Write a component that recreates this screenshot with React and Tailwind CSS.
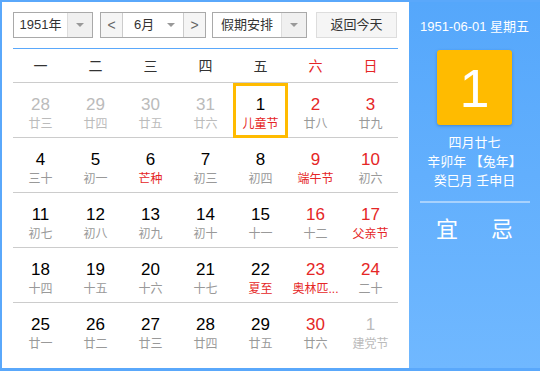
import React from 'react'

const FONT = { fontFamily: '"Liberation Sans", Arial, "Noto Sans CJK SC", sans-serif' }

const WEEK = ['一', '二', '三', '四', '五', '六', '日']

// [day, lunar, kind] kind: o = other month, r = red number, f = festival text red
const ROWS = [
  [['28', '廿三', 'o'], ['29', '廿四', 'o'], ['30', '廿五', 'o'], ['31', '廿六', 'o'], ['1', '儿童节', 'f', true], ['2', '廿八', 'r'], ['3', '廿九', 'r']],
  [['4', '三十'], ['5', '初一'], ['6', '芒种', 'f'], ['7', '初三'], ['8', '初四'], ['9', '端午节', 'rf'], ['10', '初六', 'r']],
  [['11', '初七'], ['12', '初八'], ['13', '初九'], ['14', '初十'], ['15', '十一'], ['16', '十二', 'r'], ['17', '父亲节', 'rf']],
  [['18', '十四'], ['19', '十五'], ['20', '十六'], ['21', '十七'], ['22', '夏至', 'f'], ['23', '奥林匹...', 'rf'], ['24', '二十', 'r']],
  [['25', '廿一'], ['26', '廿二'], ['27', '廿三'], ['28', '廿四'], ['29', '廿五'], ['30', '廿六', 'r'], ['1', '建党节', 'o']],
]

function Arrow() {
  return (
    <svg width="8" height="5" viewBox="0 0 8 5">
      <path d="M0 0 L8 0 L4 4 Z" fill="#999" />
    </svg>
  )
}

function Cell({ d }) {
  const [num, lunar, kind = '', sel] = d
  const other = kind === 'o'
  const redNum = kind.includes('r')
  const redTxt = kind.includes('f')
  return (
    <div className={`h-[54px] flex flex-col items-center ${sel ? 'border-[3px] border-[#ffbb00] h-[55px] -mb-[1px] relative' : ''}`}>
      <div className={`${sel ? 'mt-[9px]' : 'mt-[12px]'} text-[17px] leading-[20px] ${other ? 'text-[#bbbbbb]' : redNum ? 'text-[#e52626]' : 'text-black'}`}>{num}</div>
      <div className={`text-[12px] leading-[16px] mt-[1px] ${other ? 'text-[#bbbbbb]' : redTxt ? 'text-[#e52626]' : 'text-[#999999]'}`}>{lunar}</div>
    </div>
  )
}

export default function App() {
  return (
    <div style={FONT} className="w-[540px] h-[371px] bg-white">
      <div className="w-[540px] h-[371px] flex border-[#5aa8fb] border-t-2 border-l-2 border-b-[3px]">
        {/* left calendar */}
        <div className="w-[407px] bg-white pl-[11px] pt-[10px]">
          <div className="flex h-[26px] text-[13px] text-[#333]">
            <div className="flex w-[80px] border border-[#a9a9a9]">
              <div className="flex-1 flex items-center justify-center">1951年</div>
              <div className="w-[25px] bg-[#f0f0f0] border-l border-[#ddd] flex items-center justify-center"><Arrow /></div>
            </div>
            <div className="flex w-[106px] ml-[7px] border border-[#a9a9a9]">
              <div className="w-[22px] bg-[#f5f5f5] border-r border-[#ccc] flex items-center justify-center text-[#666] text-[14px]">&lt;</div>
              <div className="flex-1 flex items-center pl-[11px] pr-[8px] justify-between">
                <span className="text-[#333]">6月</span>
                <Arrow />
              </div>
              <div className="w-[22px] bg-[#f5f5f5] border-l border-[#ccc] flex items-center justify-center text-[#666] text-[14px]">&gt;</div>
            </div>
            <div className="flex w-[95px] ml-[6px] border border-[#a9a9a9]">
              <div className="flex-1 flex items-center justify-center">假期安排</div>
              <div className="w-[25px] bg-[#f0f0f0] border-l border-[#ddd] flex items-center justify-center"><Arrow /></div>
            </div>
            <div className="w-[81px] ml-[9px] border border-[#dddddd] bg-[#f5f5f5] flex items-center justify-center">返回今天</div>
          </div>
          <div className="w-[385px] mt-[10px] border-t border-[#5aa8fb]">
            <div className="grid grid-cols-7 h-[34px] border-b border-[#cccccc] items-center text-[14px]">
              {WEEK.map((w, i) => (
                <div key={w} className={`text-center pt-[1px] ${i >= 5 ? 'text-[#e52626]' : 'text-[#333]'}`}>{w}</div>
              ))}
            </div>
            {ROWS.map((r, i) => (
              <div key={i} className={`grid grid-cols-7 items-start ${i < ROWS.length - 1 ? 'border-b border-[#cccccc]' : ''}`}>
                {r.map((d, j) => <Cell key={j} d={d} />)}
              </div>
            ))}
          </div>
        </div>
        {/* right panel */}
        <div className="flex-1 bg-gradient-to-b from-[#55a7fb] to-[#70b8ff] flex flex-col items-center text-white">
          <div className="mt-[17px] text-[13px] leading-[16px]">1951-06-01 星期五</div>
          <div className="mt-[15px] w-[75px] h-[75px] bg-[#ffbb00] rounded-[3px] shadow-[0_1px_3px_rgba(0,60,140,0.35)] flex items-center justify-center text-[54px] leading-none font-light">1</div>
          <div className="mt-[8px] text-[13px] leading-[19px] text-center">
            <div>四月廿七</div>
            <div>辛卯年 【兔年】</div>
            <div>癸巳月 壬申日</div>
          </div>
          <div className="mt-[11px] w-[110px] h-[2px] bg-[#a8d2fd]"></div>
          <div className="mt-[15px] flex gap-[33px] text-[22px] leading-[24px]">
            <span>宜</span>
            <span>忌</span>
          </div>
        </div>
      </div>
    </div>
  )
}
